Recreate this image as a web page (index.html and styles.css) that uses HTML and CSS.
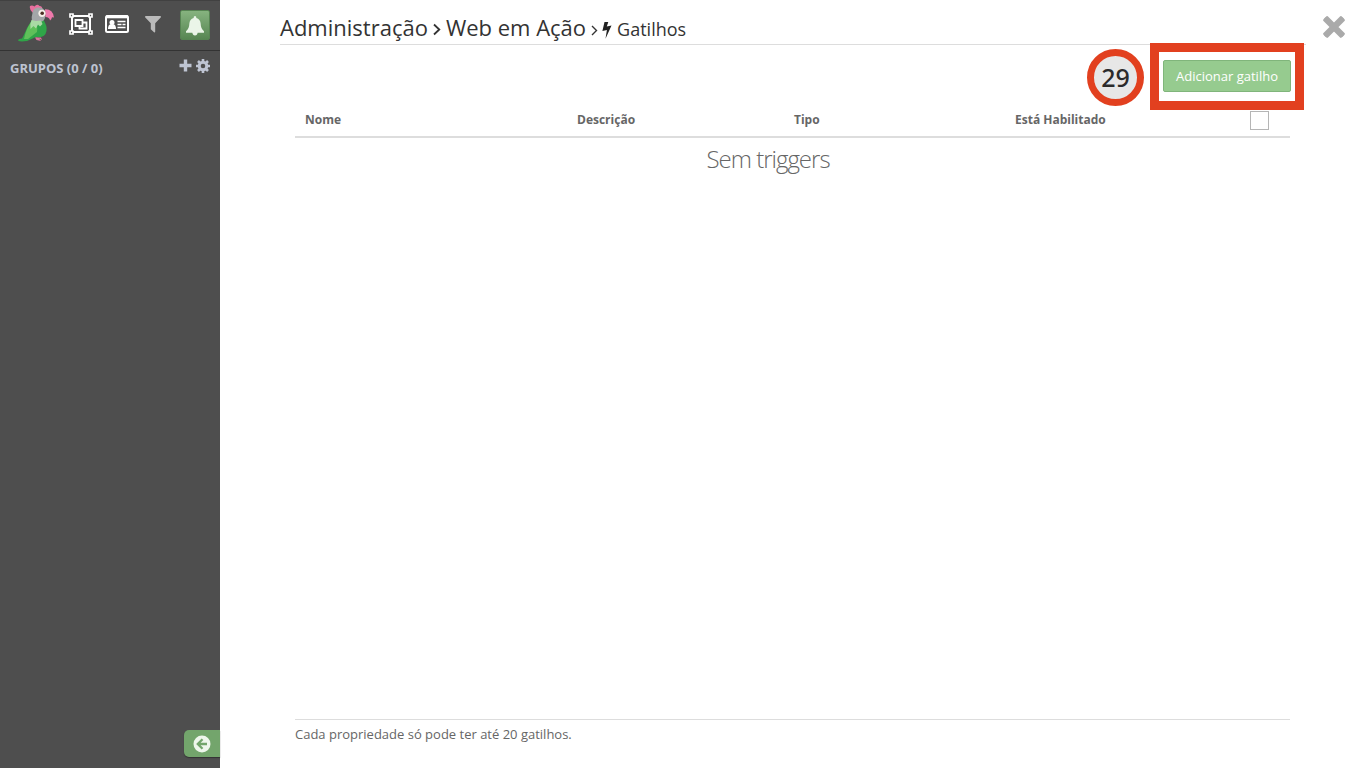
FILE: index.html
```html
<!DOCTYPE html>
<html lang="pt-BR">
<head>
<meta charset="UTF-8">
<meta name="viewport" content="width=device-width, initial-scale=1.0">
<title>Gatilhos</title>
<link rel="stylesheet" href="styles.css">
</head>
<body>
<div class="app">
    <aside class="sidebar">
        <div class="toolbar">
            <svg class="logo" width="38" height="40" viewBox="0 0 38 40">
                <path d="M13 2Q15 .6 17.5 2.5Q20-.5 22.5 2Q25 1.8 25.5 5L19 9L15.5 8.5Q12 5 13 2Z" fill="#e8709f"/>
                <path d="M15 16L10 24Q7 31 5 34.5Q1 35 1 36.5Q3 38 10 37L19 33Q28 34.5 29.5 27Q30.5 22 26 15Z" fill="#2fa548"/>
                <path d="M14 18Q9 25 7 35L11 35L20 28Q21 21 18 18Z" fill="#5fc05a"/>
                <path d="M15.5 9Q16 4 21 3.5Q28 3 28.5 10Q28.5 16 25 17.5L15 18Q14 13 15.5 9Z" fill="#a3a6a8"/>
                <path d="M14.5 16L19 17L24 16.5L25.5 20L23 22.5L21 20.5L19 24.5L16.5 22L13.5 25Q12.5 20 14.5 16Z" fill="#a9daa4"/>
                <path d="M28 5.2Q36 5 37 13.5L35 13.2Q34.5 15.5 33 16.5Q32.5 13 28.5 13Z" fill="#ee79ab"/>
                <circle cx="25" cy="9.3" r="3.6" fill="#f6efe8"/>
                <circle cx="25.2" cy="9.3" r="1.8" fill="#4b2d22"/>
                <path d="M18 33.5Q20 32.5 22 34.5L24 37L19.5 36ZM20 33.5L24 33.5L25 36Z" fill="#dc739c"/>
            </svg>
            <svg class="tool-group" width="24" height="22" viewBox="0 0 24 22" fill="none" stroke="#fff">
                <path d="M3 3H21V19H3Z" stroke-width="2"/>
                <path d="M6.5 7H13.5V13H6.5Z" stroke-width="1.8"/>
                <path d="M14 9.5H17.5V15.5H10.5V13" stroke-width="1.8"/>
                <path d="M1 1H4V4H1ZM20 1H23V4H20ZM1 18H4V21H1ZM20 18H23V21H20Z" fill="#4e4e4e" stroke-width="1.7"/>
            </svg>
            <svg class="tool-card" width="24" height="18" viewBox="0 0 24 18">
                <rect x="1" y="1" width="22" height="16" rx="1.5" fill="none" stroke="#fff" stroke-width="2"/>
                <path d="M1 1.8H23" stroke="#fff" stroke-width="3"/>
                <circle cx="7" cy="7.5" r="2.5" fill="#fff"/>
                <path d="M3 14Q3 9.7 5.5 9.2H8.5Q11 9.7 11 14Z" fill="#fff"/>
                <path d="M12.5 6.5H20.5M12.5 9.5H16.5M17.5 9.5H20.5M12.5 12.5H20.5" stroke="#fff" stroke-width="1.4"/>
            </svg>
            <svg class="tool-filter" width="16" height="17" viewBox="0 0 16 17">
                <path d="M.5 0H15.5Q16.3.8 15.7 1.6L10.2 7.3V15.8Q9.8 16.8 9 16.3L5.8 13.2V7.3L.3 1.6Q-.3.8.5 0Z" fill="#bbb"/>
            </svg>
            <button class="btn-bell">
                <svg width="20" height="20" viewBox="0 0 20 20">
                    <path d="M10 0Q11.4 0 11.4 1.9Q15.3 3 15.6 7.3Q15.8 13 19 15.2V16.8H1V15.2Q4.2 13 4.4 7.3Q4.7 3 8.6 1.9Q8.6 0 10 0ZM7.3 16.5H12.7Q12.3 19.5 10 19.5Q7.7 19.5 7.3 16.5Z" fill="#eaf5e8"/>
                </svg>
            </button>
        </div>
        <div class="groups">
            <span class="groups-title">GRUPOS (0 / 0)</span>
            <svg class="icon-plus" width="13" height="13" viewBox="0 0 13 13">
                <path d="M6.5 .5V12.5M.5 6.5H12.5" stroke="#bec4d2" stroke-width="3.4"/>
            </svg>
            <svg width="14" height="14" viewBox="0 0 14 14">
                <circle cx="7" cy="7" r="3.8" fill="none" stroke="#bec4d2" stroke-width="3"/>
                <path d="M7 0V2.5M7 11.5V14M0 7H2.5M11.5 7H14M2 2L4 4M10 10L12 12M12 2L10 4M4 10L2 12" stroke="#bec4d2" stroke-width="2.6"/>
            </svg>
        </div>
        <button class="btn-collapse">
            <svg width="18" height="18" viewBox="0 0 18 18">
                <circle cx="9" cy="9" r="8.5" fill="#eef6ec"/>
                <path d="M9.5 4.2L4.8 9L9.5 13.8M5.5 9H14" fill="none" stroke="#73a56c" stroke-width="2.3"/>
            </svg>
        </button>
    </aside>

    <main class="content">
        <header class="page-header">
            <h1 class="breadcrumb">
                <span>Administração</span>
                <svg class="sep" width="8" height="13" viewBox="0 0 8 13"><path d="M1 1.5L6.3 6.5L1 11.5" fill="none" stroke="#333" stroke-width="1.8"/></svg>
                <span>Web em Ação</span>
                <svg class="sep-small" width="7" height="11" viewBox="0 0 7 11"><path d="M1 1L5.5 5.5L1 10" fill="none" stroke="#333" stroke-width="1.4"/></svg>
                <svg class="bolt" width="10" height="17" viewBox="0 0 10 17"><path d="M2.5 0H6.3L4.8 4.6L9.5 3.5L3.5 16.8L4.9 8L.4 9.1Z" fill="#222"/></svg>
                <small>Gatilhos</small>
            </h1>
        </header>
        <svg class="close" width="22" height="22" viewBox="0 0 22 22">
            <path d="M4 4L18 18M18 4L4 18" stroke="#aaa" stroke-width="6.4" stroke-linecap="square" stroke-linejoin="round"/>
        </svg>

        <section class="triggers">
            <div class="actions">
                <div class="step">29</div>
                <div class="highlight">
                    <button class="btn-add">Adicionar gatilho</button>
                </div>
            </div>
            <div class="table-head">
                <span>Nome</span>
                <span>Descrição</span>
                <span>Tipo</span>
                <span>Está Habilitado</span>
                <i class="checkbox"></i>
            </div>
            <p class="empty">Sem triggers</p>
            <footer class="note">Cada propriedade só pode ter até 20 gatilhos.</footer>
        </section>
    </main>
</div>
</body>
</html>
```
FILE: styles.css
```css
* {
    box-sizing: border-box;
}
body {
    margin: 0;
    font-family: "Open Sans", "Noto Sans", sans-serif;
    color: #666;
    background: #fff;
    overflow: hidden;
}
svg {
    display: block;
    flex: none;
}
button {
    font-family: inherit;
    padding: 0;
    cursor: pointer;
}
.app {
    display: flex;
    height: 768px;
}

/* sidebar */
.sidebar {
    width: 220px;
    flex: none;
    display: flex;
    flex-direction: column;
    background: #4e4e4e;
}
.toolbar {
    height: 51px;
    display: flex;
    align-items: flex-start;
    padding-left: 17px;
    border-top: 1px solid #414141;
    border-bottom: 1px solid #333;
}
.logo {
    margin-top: 3px;
}
.tool-group {
    margin: 12px 0 0 14px;
}
.tool-card {
    margin: 14px 0 0 12px;
}
.tool-filter {
    margin: 15px 0 0 16px;
}
.btn-bell {
    width: 30px;
    height: 30px;
    margin: 9px 0 0 19px;
    border: 1px solid #568452;
    border-radius: 2px;
    background: linear-gradient(#86b37f, #578653);
    display: flex;
    align-items: center;
    justify-content: center;
}
.btn-bell svg {
    margin-top: 2px;
}
.groups {
    display: flex;
    align-items: flex-start;
    padding: 8px 10px 0;
}
.groups-title {
    flex: 1;
    font-size: 13px;
    line-height: 19px;
    font-weight: 700;
    color: #bec4d2;
}
.icon-plus {
    margin-right: 4px;
}
.btn-collapse {
    width: 36px;
    height: 27px;
    margin: auto 0 11px auto;
    padding-left: 9px;
    border: 0;
    border-radius: 5px 0 0 5px;
    background: #73a56c;
    box-shadow: 0 1px 1px #333;
}

/* content */
.content {
    position: relative;
    flex: 1;
    display: flex;
    flex-direction: column;
    padding-left: 60px;
}
.page-header {
    width: 1026px;
    height: 45px;
    border-bottom: 1px solid #ddd;
}
.breadcrumb {
    display: flex;
    margin: 0;
    padding-top: 11px;
    font-size: 22px;
    line-height: 32px;
    font-weight: 400;
    color: #333;
    white-space: nowrap;
}
.breadcrumb small {
    font-size: 18px;
    line-height: 36px;
}
.sep {
    margin: 12px 5px 0;
}
.sep-small {
    margin: 14px 4px 0 5px;
}
.bolt {
    margin: 11px 5px 0 0;
}
.close {
    position: absolute;
    top: 16px;
    left: 1103px;
    border-radius: 5px;
}
.triggers {
    flex: 1;
    width: 995px;
    margin-left: 15px;
    display: flex;
    flex-direction: column;
}
.actions {
    height: 58px;
    margin: -2px -14px 0 0;
    display: flex;
    align-items: flex-start;
    justify-content: flex-end;
}
.step {
    width: 57px;
    height: 57px;
    margin: 6px 6px 0 0;
    border: 7px solid #e2401f;
    border-radius: 50%;
    background: #e7e7e7;
    color: #2b2b2b;
    font-family: "Noto Sans", "Open Sans", sans-serif;
    font-size: 25px;
    line-height: 42px;
    font-weight: 500;
    text-align: center;
}
.highlight {
    width: 154px;
    height: 67px;
    padding: 8px 4px;
    border: 9px solid #e2401f;
    background: #fff;
}
.btn-add {
    display: block;
    width: 128px;
    height: 32px;
    border: 1px solid #80b57b;
    border-radius: 2px;
    background: #96cb8f;
    color: #fff;
    font-size: 13px;
}
.table-head {
    height: 37px;
    display: grid;
    grid-template-columns: 272px 217px 221px 235px 20px;
    padding: 9px 0 0 10px;
    border-bottom: 2px solid #ddd;
    font-size: 12px;
    line-height: 19px;
    font-weight: 700;
}
.checkbox {
    width: 19px;
    height: 19px;
    margin-top: 1px;
    border: 1px solid #b5b5b5;
    background: #fff;
}
.empty {
    margin: 3px 0 0;
    padding-right: 49px;
    font-size: 24px;
    line-height: 36px;
    font-weight: 300;
    letter-spacing: -1px;
    text-align: center;
}
.note {
    height: 49px;
    margin-top: auto;
    padding-top: 4px;
    border-top: 1px solid #ddd;
    font-size: 13px;
    line-height: 20px;
}
```
